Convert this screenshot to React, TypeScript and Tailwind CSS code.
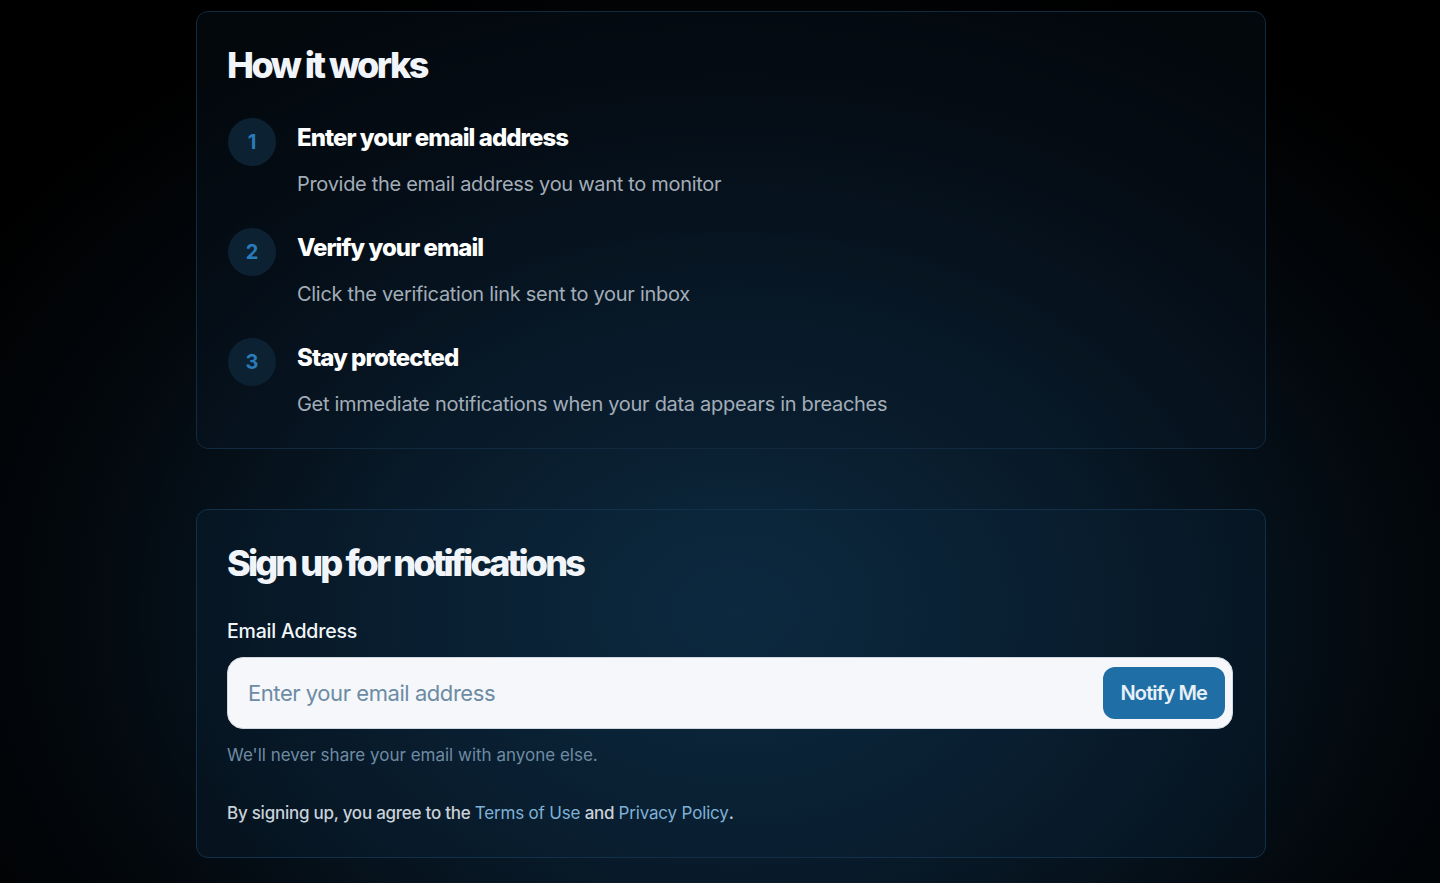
import React, { useState } from 'react';

const steps = [
  { n: 1, title: 'Enter your email address', text: 'Provide the email address you want to monitor' },
  { n: 2, title: 'Verify your email', text: 'Click the verification link sent to your inbox' },
  { n: 3, title: 'Stay protected', text: 'Get immediate notifications when your data appears in breaches' },
];

const App: React.FC = () => {
  const [email, setEmail] = useState('');

  return (
    <div
      className="min-h-[883px] w-full bg-black bg-[radial-gradient(ellipse_62%_75%_at_51%_68%,#0d2a40_0%,#081a29_40%,#03080d_75%,#000_100%)] pl-[196px] pt-[11px] pb-10"
      style={{ fontFamily: 'Inter, "Noto Sans", sans-serif' }}
    >
      <div className="w-[1070px] flex flex-col gap-[60px]">
        {/* how it works */}
        <section className="rounded-xl border border-[#112a3f] bg-[#0b1c2b]/30 px-[30px] pt-[33px] pb-[30px]">
          <h2 className="text-[36px] leading-10 font-extrabold tracking-[-0.07em] text-[#f1f5f9]">How it works</h2>
          <div className="mt-[33px] flex flex-col gap-[30px]">
            {steps.map((s) => (
              <div key={s.n} className="flex items-start gap-[21px] pl-px">
                <div className="w-12 h-12 rounded-full bg-[#0c2132] flex items-center justify-center flex-shrink-0">
                  <span className="text-[20px] font-bold text-[#2a7bb9]">{s.n}</span>
                </div>
                <div className="pt-1">
                  <h3 className="text-2xl leading-8 font-extrabold tracking-[-0.04em] text-white">{s.title}</h3>
                  <p className="mt-4 text-[20px] leading-7 tracking-[-0.015em] text-[#a3adb8]">{s.text}</p>
                </div>
              </div>
            ))}
          </div>
        </section>

        {/* sign up */}
        <section className="rounded-xl border border-[#12304a] bg-[#0d2940]/25 px-[30px] pt-[33px] pb-[30px]">
          <h2 className="text-[36px] leading-10 font-extrabold tracking-[-0.08em] text-[#f1f5f9]">Sign up for notifications</h2>
          <label htmlFor="email" className="mt-[34px] block text-[19.5px] leading-7 font-medium tracking-[-0.01em] text-[#f1f5f9]">
            Email Address
          </label>
          <div className="mt-3 w-[1006px] h-[72px] rounded-2xl border border-[#cfd8e0] bg-[#f5f7fa] flex items-center pl-5 pr-[7px]">
            <input
              id="email"
              type="email"
              value={email}
              onChange={(e) => setEmail(e.target.value)}
              placeholder="Enter your email address"
              className="flex-1 min-w-0 bg-transparent outline-none text-[22px] tracking-[-0.02em] text-[#1e293b] placeholder:text-[#6d8ba5]"
            />
            <button className="h-[52px] px-[18px] rounded-xl bg-[#1f6fa6] text-[20px] font-semibold tracking-[-0.045em] text-[#e8f0f6]">
              Notify Me
            </button>
          </div>
          <p className="mt-3 text-[17px] leading-7 text-[#6f8ba3]">We'll never share your email with anyone else.</p>
          <p className="mt-[30px] text-[17px] leading-7 font-medium tracking-[-0.015em] text-[#c9d1d9]">
            By signing up, you agree to the{' '}
            <a href="#" className="font-normal tracking-[-0.01em] text-[#7fb1d6]">Terms of Use</a>{' '}
            and{' '}
            <a href="#" className="font-normal tracking-[-0.01em] text-[#7fb1d6]">Privacy Policy</a>.
          </p>
        </section>
      </div>
    </div>
  );
};

export default App;
